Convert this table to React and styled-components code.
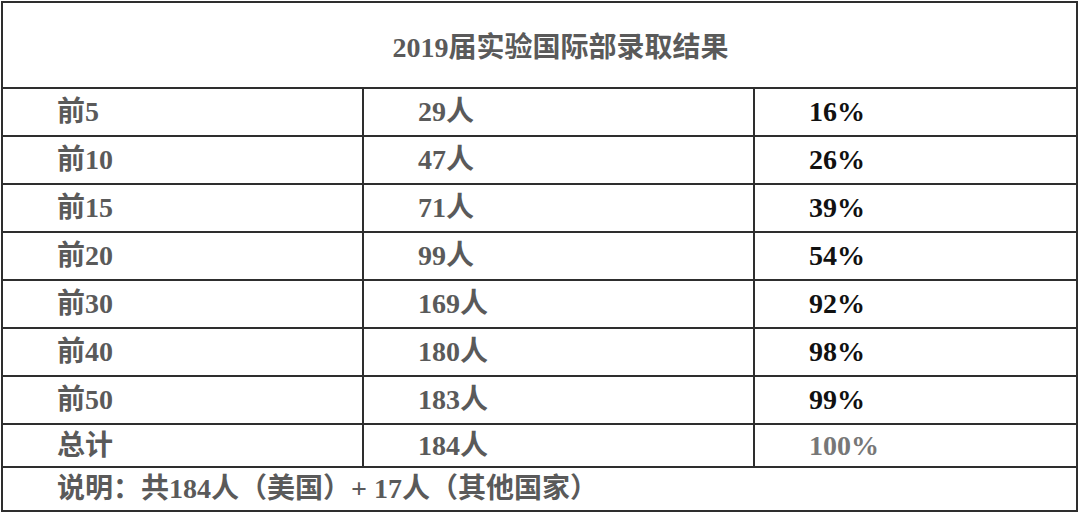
import React from 'react'
import styled, { createGlobalStyle } from 'styled-components'

const GlobalStyle = createGlobalStyle`
  *, *::before, *::after {
    box-sizing: border-box;
  }
  body {
    margin: 0;
    background: #fff;
    font-family: "Liberation Serif", "Noto Sans CJK SC", serif;
  }
`

const Sheet = styled.div`
  margin: 1px 0 0 1px;
  width: 1077px;
  border: 2px solid #2e2e2e;
  background: #fff;
`

const Title = styled.div`
  height: 84px;
  display: flex;
  align-items: center;
  justify-content: center;
  padding-left: 42px;
  font-size: 28px;
  font-weight: 700;
  color: #5a5a5a;
`

const Row = styled.div`
  display: grid;
  grid-template-columns: 359px 391px 1fr;
  height: ${(p) => p.$h}px;
  border-top: 2px solid #2e2e2e;
`

const Cell = styled.div`
  display: flex;
  align-items: center;
  padding-left: 54px;
  font-size: 28px;
  line-height: 1;
  font-weight: 700;
  color: ${(p) => p.$color || '#5a5a5a'};
  & + & {
    border-left: 2px solid #2e2e2e;
  }
`

const Note = styled.div`
  height: 44px;
  display: flex;
  align-items: center;
  padding-left: 54px;
  border-top: 2px solid #2e2e2e;
  font-size: 28px;
  line-height: 1;
  font-weight: 700;
  color: #5a5a5a;
`

const rows = [
  ['前5', '29人', '16%'],
  ['前10', '47人', '26%'],
  ['前15', '71人', '39%'],
  ['前20', '99人', '54%'],
  ['前30', '169人', '92%'],
  ['前40', '180人', '98%'],
  ['前50', '183人', '99%'],
]

export default function App() {
  return (
    <>
      <GlobalStyle />
      <Sheet>
        <Title>2019届实验国际部录取结果</Title>
        {rows.map(([rank, count, pct]) => (
          <Row key={rank} $h={48}>
            <Cell>{rank}</Cell>
            <Cell>{count}</Cell>
            <Cell $color="#111">{pct}</Cell>
          </Row>
        ))}
        <Row $h={43}>
          <Cell>总计</Cell>
          <Cell>184人</Cell>
          <Cell $color="#777">100%</Cell>
        </Row>
        <Note>说明：共184人（美国）+ 17人（其他国家）</Note>
      </Sheet>
    </>
  )
}
